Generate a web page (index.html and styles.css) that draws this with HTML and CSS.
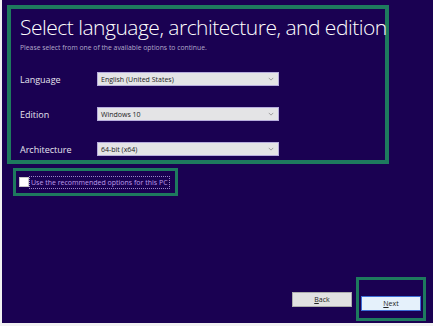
FILE: index.html
```html
<!DOCTYPE html>
<html lang="en">
<head>
    <meta charset="UTF-8">
    <title>Windows 10 Setup</title>
    <link rel="stylesheet" href="styles.css">
</head>
<body>
    <div class="window">

        <!-- Main options -->
        <div class="main-box">
            <h1 class="title">Select language, architecture, and edition</h1>
            <p class="subtitle">Please select from one of the available options to continue.</p>

            <div class="field">
                <span class="field-label">Language</span>
                <div class="select">
                    <span>English (United States)</span>
                    <svg class="chevron" viewBox="0 0 8 5"><path d="M1 1l3 3 3-3" fill="none" stroke="#888" stroke-width="1"/></svg>
                </div>
            </div>
            <div class="field">
                <span class="field-label">Edition</span>
                <div class="select">
                    <span>Windows 10</span>
                    <svg class="chevron" viewBox="0 0 8 5"><path d="M1 1l3 3 3-3" fill="none" stroke="#888" stroke-width="1"/></svg>
                </div>
            </div>
            <div class="field">
                <span class="field-label">Architecture</span>
                <div class="select">
                    <span>64-bit (x64)</span>
                    <svg class="chevron" viewBox="0 0 8 5"><path d="M1 1l3 3 3-3" fill="none" stroke="#888" stroke-width="1"/></svg>
                </div>
            </div>
        </div>

        <!-- Recommended checkbox -->
        <div class="option-box">
            <span class="checkbox"></span>
            <span class="option-text">Use the recommended options for this PC</span>
        </div>

        <!-- Buttons -->
        <div class="footer">
            <button class="btn"><u>B</u>ack</button>
            <div class="next-box">
                <button class="btn btn-default"><u>N</u>ext</button>
            </div>
        </div>

    </div>
</body>
</html>
```

FILE: styles.css
```css
/* General */
body {
    margin: 0;
    padding: 0;
    background-color: #f2f2f2;
    font-family: "Open Sans", Arial, sans-serif;
}

.window {
    width: 431px;
    height: 323px;
    margin-left: 2px;
    background-color: #1a0152;
    box-sizing: border-box;
    padding: 5px 7px 2px 5px;
    display: flex;
    flex-direction: column;
}

/* Main box */
.main-box {
    width: 382px;
    height: 159px;
    flex-shrink: 0;
    box-sizing: border-box;
    border: 4px solid #1e7a5e;
    padding: 0 0 0 9px;
}

.title {
    margin: 4px 0 0 0;
    font-weight: 300;
    font-size: 21px;
    line-height: 28px;
    color: #ffffff;
    white-space: nowrap;
    letter-spacing: -0.5px;
}

.subtitle {
    margin: 2px 0 20px 0;
    font-size: 6.8px;
    color: #b3aacb;
}

.field {
    display: flex;
    align-items: center;
    height: 14px;
    margin-bottom: 21px;
}

.field-label {
    width: 77px;
    font-size: 9px;
    color: #e6e4ee;
}

.select {
    width: 182px;
    height: 14px;
    box-sizing: border-box;
    border: 1px solid #b7addd;
    background-color: #e4e4e6;
    display: flex;
    align-items: center;
    justify-content: space-between;
    padding: 0 4px 0 3px;
    font-size: 7px;
    color: #222;
}

.chevron {
    width: 6px;
    height: 4px;
}

/* Checkbox option */
.option-box {
    width: 165px;
    height: 28px;
    margin: 4px 0 0 6px;
    box-sizing: border-box;
    border: 3px solid #1e7a5e;
    display: flex;
    align-items: center;
    padding-left: 3px;
}

.checkbox {
    width: 8px;
    height: 8px;
    background-color: #ffffff;
    border: 1px solid #c8c8c8;
}

.option-text {
    font-size: 7px;
    color: #bd9cea;
    border: 1px dotted #9a86c8;
    padding: 1px 1px 1px 1px;
    white-space: nowrap;
}

/* Footer buttons */
.footer {
    margin-top: auto;
    display: flex;
    justify-content: flex-end;
    align-items: center;
}

.btn {
    width: 60px;
    height: 15px;
    padding: 0;
    font-family: "Open Sans", Arial, sans-serif;
    font-size: 7px;
    color: #222;
    background-color: #e1e1e1;
    border: 1px solid #adadad;
}

.next-box {
    margin-left: 4px;
    border: 3px solid #1e7a5e;
    padding: 9px 2px 7px 2px;
}

.btn-default {
    border-color: #3c6fd6;
    background-color: #e5f1fb;
}
```
